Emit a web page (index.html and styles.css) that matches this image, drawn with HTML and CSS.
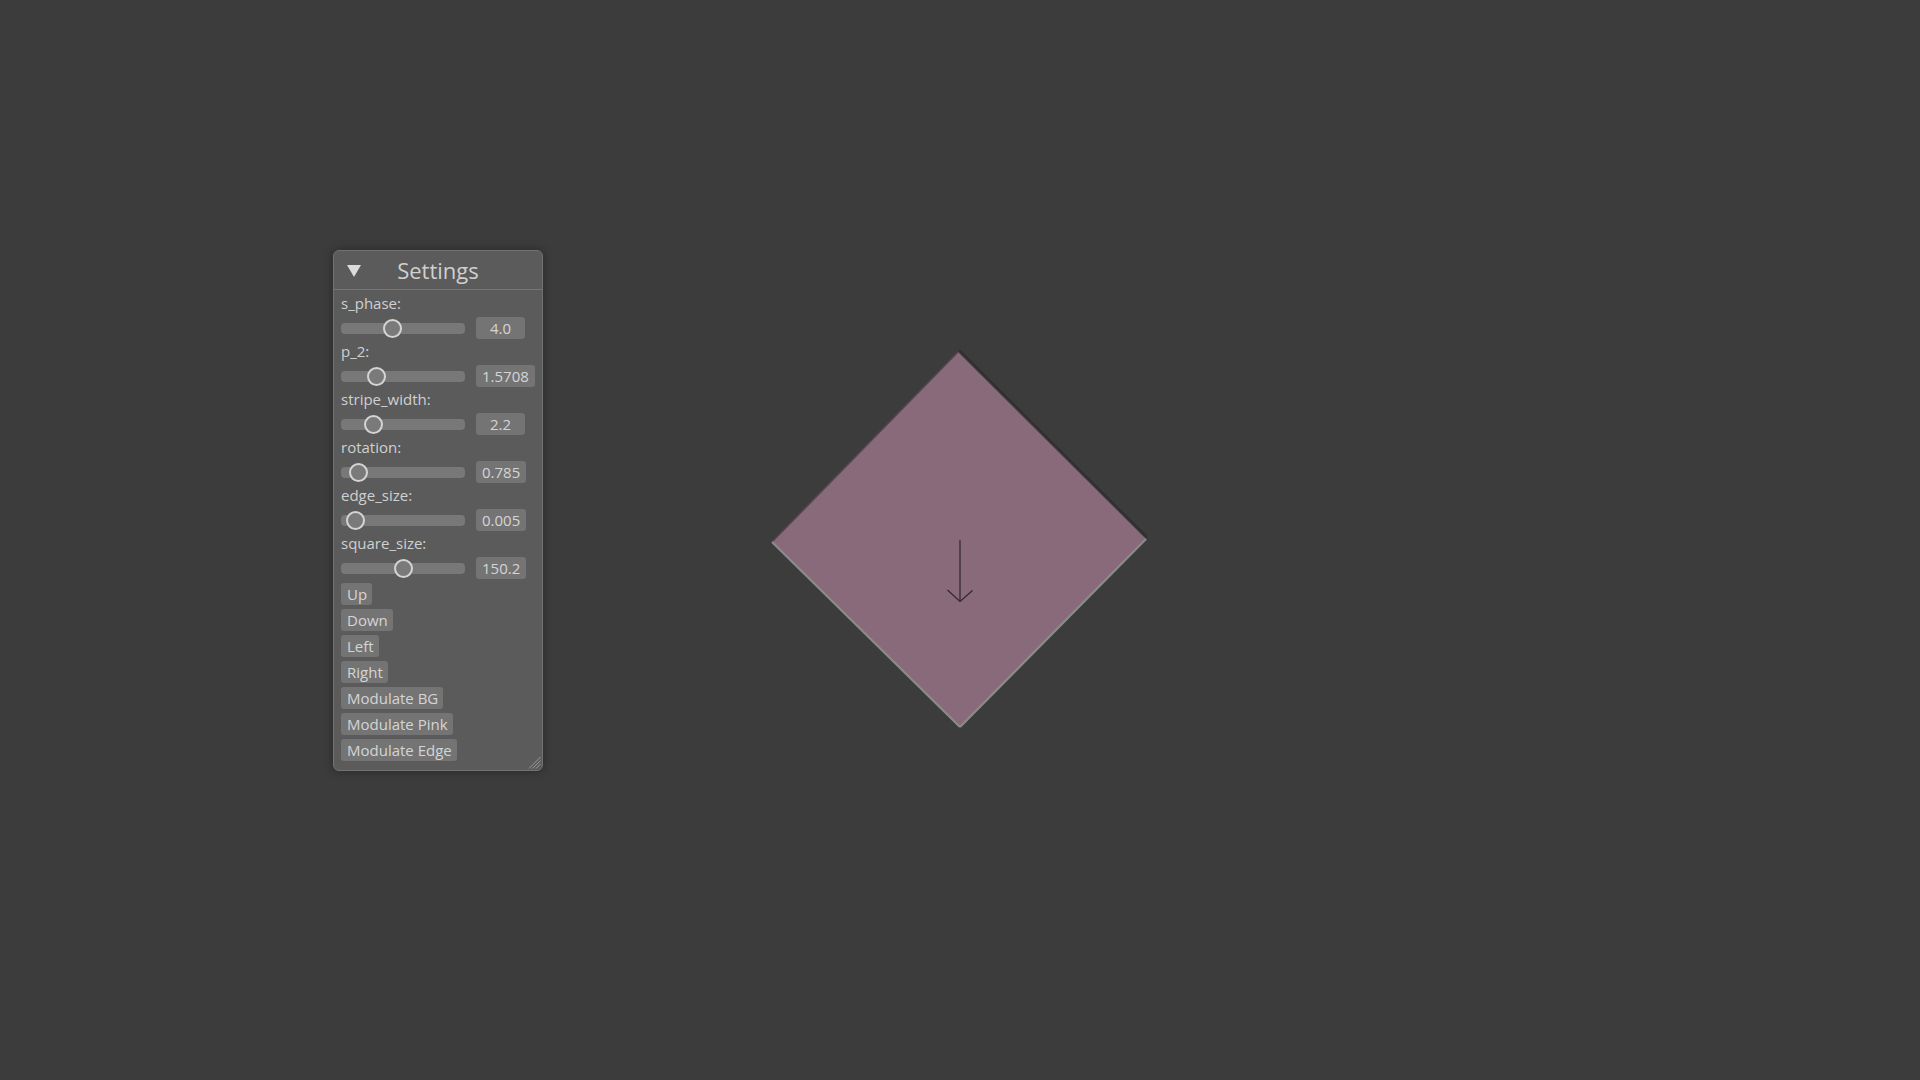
FILE: index.html
```html
<!DOCTYPE html>
<html>
<head>
<meta charset="utf-8">
<title>Settings</title>
<link rel="stylesheet" href="styles.css">
</head>
<body>
<div class="stage">
  <svg class="canvas" width="1920" height="1080" viewBox="0 0 1920 1080">
    <polygon points="958,352 1146,539 960,727 772,542" fill="#886a7a"/>
    <line x1="772" y1="542" x2="958" y2="352" stroke="#56444f" stroke-width="1.5"/>
    <line x1="959" y1="350" x2="1147" y2="537" stroke="#2f2f2f" stroke-width="2"/>
    <line x1="772" y1="542" x2="960" y2="727" stroke="#8b8b8b" stroke-width="2.2"/>
    <line x1="960" y1="727" x2="1146" y2="539" stroke="#8b8b8b" stroke-width="2.2"/>
    <g stroke="#33262e" stroke-width="1.2" fill="none">
      <line x1="960" y1="540" x2="960" y2="601"/>
      <polyline points="947.5,590 960,601.5 972.5,590.5"/>
    </g>
  </svg>

  <div class="panel">
    <div class="header">
      <svg class="collapse" width="14" height="12" viewBox="0 0 14 12"><polygon points="0,0 14,0 7,12" fill="#dcdcdc"/></svg>
      <div class="title">Settings</div>
    </div>
    <div class="body">
      <div class="field">
        <div class="label">s_phase:</div>
        <div class="row"><div class="track"><div class="knob" style="left:42px"></div></div><div class="value">4.0</div></div>
      </div>
      <div class="field">
        <div class="label">p_2:</div>
        <div class="row"><div class="track"><div class="knob" style="left:26px"></div></div><div class="value">1.5708</div></div>
      </div>
      <div class="field">
        <div class="label">stripe_width:</div>
        <div class="row"><div class="track"><div class="knob" style="left:23px"></div></div><div class="value">2.2</div></div>
      </div>
      <div class="field">
        <div class="label">rotation:</div>
        <div class="row"><div class="track"><div class="knob" style="left:8px"></div></div><div class="value">0.785</div></div>
      </div>
      <div class="field">
        <div class="label">edge_size:</div>
        <div class="row"><div class="track"><div class="knob" style="left:4.5px"></div></div><div class="value">0.005</div></div>
      </div>
      <div class="field">
        <div class="label">square_size:</div>
        <div class="row"><div class="track"><div class="knob" style="left:52.5px"></div></div><div class="value">150.2</div></div>
      </div>
      <button class="btn">Up</button>
      <button class="btn">Down</button>
      <button class="btn">Left</button>
      <button class="btn">Right</button>
      <button class="btn">Modulate BG</button>
      <button class="btn">Modulate Pink</button>
      <button class="btn">Modulate Edge</button>
    </div>
    <svg class="grip" width="13" height="13" viewBox="0 0 13 13">
      <g stroke="#9a9a9a" stroke-width="1">
        <line x1="1" y1="12.5" x2="12.5" y2="1"/>
        <line x1="4.5" y1="12.5" x2="12.5" y2="4.5"/>
        <line x1="8" y1="12.5" x2="12.5" y2="8"/>
      </g>
    </svg>
  </div>
</div>
</body>
</html>
```

FILE: styles.css
```css
html, body {
  margin: 0;
  padding: 0;
  background: #3c3c3c;
  width: 1920px;
  height: 1080px;
  overflow: hidden;
  font-family: "Open Sans", "DejaVu Sans", sans-serif;
}

.stage {
  position: relative;
  width: 1920px;
  height: 1080px;
}

.canvas {
  position: absolute;
  left: 0;
  top: 0;
}

.panel {
  position: absolute;
  left: 333px;
  top: 250px;
  width: 210px;
  box-sizing: border-box;
  background: #5b5b5b;
  border: 1px solid #727272;
  border-radius: 6px;
  box-shadow: 0 0 10px rgba(0, 0, 0, 0.35);
  color: #d0d0d0;
}

.header {
  display: grid;
  grid-template-columns: 1fr;
  align-items: center;
  height: 38px;
  border-bottom: 1px solid #757575;
}

.collapse {
  grid-area: 1 / 1;
  justify-self: start;
  margin-left: 13px;
  margin-top: 2px;
}

.title {
  grid-area: 1 / 1;
  text-align: center;
  font-size: 22px;
  line-height: 36px;
  color: #d0d0d0;
}

.body {
  display: flex;
  flex-direction: column;
  align-items: flex-start;
  gap: 4px;
  padding: 5px 7px 9px 7px;
}

.field {
  display: flex;
  flex-direction: column;
  width: 100%;
}

.label {
  height: 22px;
  line-height: 16px;
  font-size: 15px;
  color: #d0d0d0;
}

.row {
  display: flex;
  align-items: center;
  height: 22px;
  gap: 11px;
}

.track {
  position: relative;
  width: 124px;
  height: 11px;
  border-radius: 4px;
  background: #787878;
}

.knob {
  position: absolute;
  top: -4px;
  width: 19px;
  height: 19px;
  box-sizing: border-box;
  border-radius: 50%;
  border: 2px solid #d4d4d4;
  background: #7a7a7a;
}

.value {
  min-width: 49px;
  height: 22px;
  box-sizing: border-box;
  padding: 0 6px;
  border-radius: 3px;
  background: #747474;
  font-size: 15px;
  line-height: 22px;
  text-align: center;
  color: #d4d4d4;
}

.btn {
  height: 22px;
  margin: 0;
  padding: 0 5px 0 6px;
  border: none;
  border-radius: 3px;
  background: #747474;
  color: #d4d4d4;
  font-family: "Open Sans", "DejaVu Sans", sans-serif;
  font-size: 15px;
  line-height: 22px;
}

.grip {
  position: absolute;
  right: 1px;
  bottom: 1px;
}
```
